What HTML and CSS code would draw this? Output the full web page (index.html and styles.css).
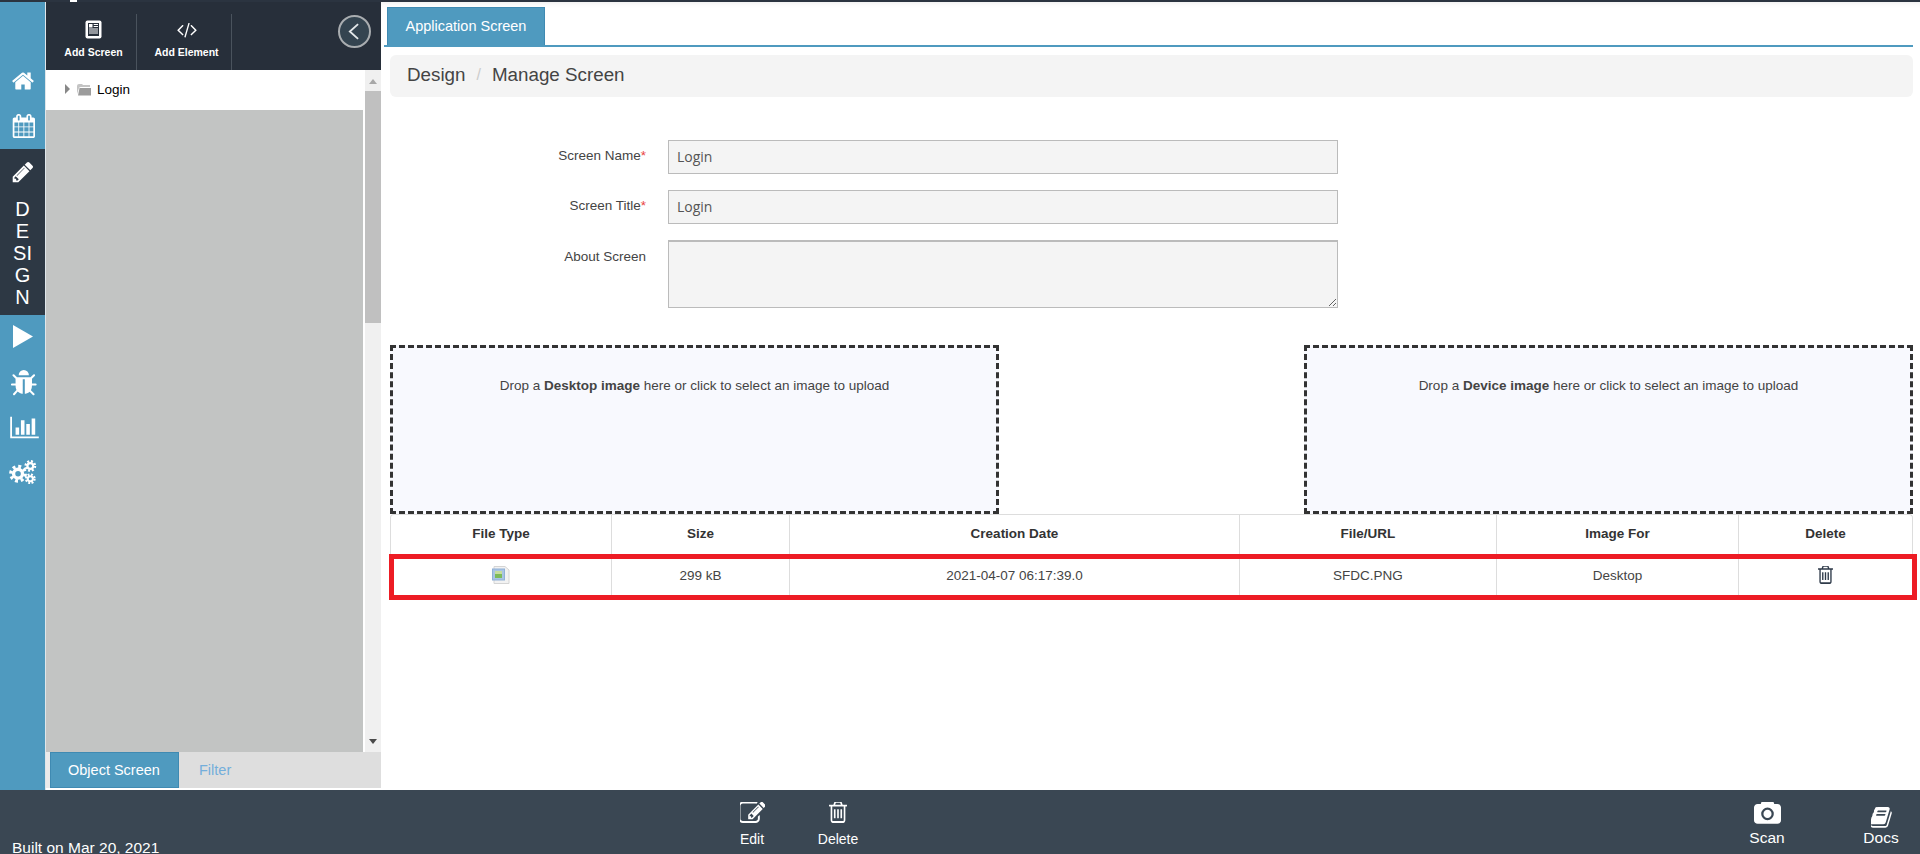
FILE: index.html
```html
<!DOCTYPE html>
<html lang="en">
<head>
    <meta charset="UTF-8">
    <title>Design - Manage Screen</title>
    <link rel="stylesheet" href="styles.css">
</head>
<body>
    <div class="top-strip"><span class="logo-tick"></span></div>
    <div class="app-row">
        <nav class="side-nav">
            <a class="nav-item nav-item-up"><svg class="nav-icon" viewBox="0 0 1792 1792"><path d="M1472 992v480q0 26-19 45t-45 19h-384v-384h-256v384h-384q-26 0-45-19t-19-45v-480q0-1 .5-3t.5-3l575-474 575 474q1 2 1 6zm223-69l-62 74q-8 9-21 11h-3q-13 0-21-7l-692-577-692 577q-12 8-24 7-13-2-21-11l-62-74q-8-10-7-23.5t11-21.5l719-599q32-26 76-26t76 26l244 204v-195q0-14 9-23t23-9h192q14 0 23 9t9 23v408l219 182q10 8 11 21.5t-7 23.5z"/></svg></a>
            <a class="nav-item nav-item-up"><svg class="nav-icon" viewBox="0 0 1664 1792"><path d="M192 1664h288v-288h-288v288zm352 0h320v-288h-320v288zm-352-352h288v-320h-288v320zm352 0h320v-320h-320v320zm-352-384h288v-288h-288v288zm736 736h320v-288h-320v288zm-384-736h320v-288h-320v288zm768 736h288v-288h-288v288zm-384-352h320v-320h-320v320zm-352-864v-288q0-13-9.5-22.5t-22.5-9.5h-64q-13 0-22.5 9.5t-9.5 22.5v288q0 13 9.5 22.5t22.5 9.5h64q13 0 22.5-9.5t9.5-22.5zm736 864h288v-320h-288v320zm-384-384h320v-288h-320v288zm384 0h288v-288h-288v288zm32-480v-288q0-13-9.5-22.5t-22.5-9.5h-64q-13 0-22.5 9.5t-9.5 22.5v288q0 13 9.5 22.5t22.5 9.5h64q13 0 22.5-9.5t9.5-22.5zm384-64v1280q0 52-38 90t-90 38h-1408q-52 0-90-38t-38-90v-1280q0-52 38-90t90-38h128v-96q0-66 47-113t113-47h64q66 0 113 47t47 113v96h384v-96q0-66 47-113t113-47h64q66 0 113 47t47 113v96h128q52 0 90 38t38 90z"/></svg></a>
            <div class="nav-active">
                <a class="nav-item"><svg class="nav-icon" viewBox="0 0 1792 1792"><path d="M491 1536l91-91-235-235-91 91v107h128v128h107zm523-928q0-22-22-22-10 0-17 7l-542 542q-7 7-7 17 0 22 22 22 10 0 17-7l542-542q7-7 7-17zm-54-192l416 416-832 832h-416v-416zm683 96q0 53-37 90l-166 166-416-416 166-165q36-38 90-38 53 0 91 38l235 234q37 39 37 91z"/></svg></a>
                <div class="nav-label">DESIGN</div>
            </div>
            <a class="nav-item nav-item-up"><svg class="nav-icon nav-icon-play" viewBox="0 0 21 24"><path d="M0 0 L21 12 L0 24 Z"/></svg></a>
            <a class="nav-item"><svg class="nav-icon nav-icon-bug" viewBox="100 100 1620 1600"><path d="M1696 960q0 26-19 45t-45 19h-224q0 171-67 290l208 209q19 19 19 45t-19 45q-18 19-45 19t-45-19l-198-197q-5 5-15 13t-42 28.5-65 36.5-82 29-97 13v-896h-128v896q-51 0-101.5-13.5t-87-33-66-39-43.5-32.5l-15-14-183 207q-20 21-48 21-24 0-43-16-19-18-20.5-44.5t15.5-46.5l202-227q-58-114-58-274h-224q-26 0-45-19t-19-45 19-45 45-19h224v-294l-173-173q-19-19-19-45t19-45 45-19 45 19l173 173h844l173-173q19-19 45-19t45 19 19 45-19 45l-173 173v294h224q26 0 45 19t19 45zm-480-576h-640q0-133 93.5-226.5t226.5-93.5 226.5 93.5 93.5 226.5z"/></svg></a>
            <a class="nav-item"><svg class="nav-icon nav-icon-chart" viewBox="0 0 2048 1792"><path d="M640 896v512h-256v-512h256zm384-512v1024h-256v-1024h256zm1024 1152v128h-2048v-1536h128v1408h1920zm-640-896v768h-256v-768h256zm384-384v1152h-256v-1152h256z"/></svg></a>
            <a class="nav-item nav-item-up"><svg class="nav-icon nav-icon-gears" viewBox="0 0 26 22">
                <circle class="gear-part" cx="9" cy="13" r="6.5" stroke-width="3" stroke-dasharray="2.6 2.5"/>
                <circle class="gear-part" cx="9" cy="13" r="4" stroke-width="3"/>
                <circle class="gear-part" cx="20" cy="6" r="4.2" stroke-width="2.2" stroke-dasharray="1.8 1.5"/>
                <circle class="gear-part" cx="20" cy="6" r="2.6" stroke-width="2"/>
                <circle class="gear-part" cx="20" cy="17.5" r="3.8" stroke-width="2" stroke-dasharray="1.7 1.3"/>
                <circle class="gear-part" cx="20" cy="17.5" r="2.3" stroke-width="1.8"/>
            </svg></a>
        </nav>

        <aside class="tree-panel">
            <div class="toolbar">
                <a class="tool-btn tool-screen">
                    <svg class="tool-icon" viewBox="0 0 18 19">
                        <rect x="0.5" y="0.5" width="16" height="18" rx="2" fill="#fff"/>
                        <rect x="3" y="3" width="11" height="13" fill="#272f3a"/>
                        <rect x="4" y="4" width="3.5" height="3.5" fill="#fff"/>
                        <path d="M8.7 4.5h4.3M8.7 6.5h4.3M4 9h9M4 11h9M4 13h9" stroke="#fff" fill="none"/>
                    </svg>
                    <span>Add Screen</span>
                </a>
                <a class="tool-btn tool-element">
                    <svg class="tool-icon tool-icon-code" viewBox="0 0 1920 1792"><path d="M617 1399l-50 50q-10 10-23 10t-23-10l-466-466q-10-10-10-23t10-23l466-466q10-10 23-10t23 10l50 50q10 10 10 23t-10 23l-393 393 393 393q10 10 10 23t-10 23zm591-1067l-373 1291q-4 13-15.5 19.5t-23.5 2.5l-62-17q-13-4-19.5-15.5t-2.5-24.5l373-1291q4-13 15.5-19.5t23.5-2.5l62 17q13 4 19.5 15.5t2.5 24.5zm657 651l-466 466q-10 10-23 10t-23-10l-50-50q-10-10-10-23t10-23l393-393-393-393q-10-10-10-23t10-23l50-50q10-10 23-10t23 10l466 466q10 10 10 23t-10 23z"/></svg>
                    <span>Add Element</span>
                </a>
                <a class="collapse-btn">
                    <svg viewBox="0 0 12 18" class="collapse-icon"><path d="M11 1 L2 9 L11 17" fill="none" stroke="#e4e8ea" stroke-width="2"/></svg>
                </a>
            </div>
            <div class="tree-body">
                <div class="tree-col">
                    <div class="tree-node">
                        <span class="tree-arrow"></span>
                        <svg class="tree-folder" viewBox="0 0 14 12"><path d="M0 2 Q0 0 2 0 H5 L6 1 H13 V3 H4 Q2.500 3 2 4 L0 10 Z" fill="#c4c4c4"/><path d="M1 11.500 L2.500 4 H14 V11.500 Z" fill="#9c9c9c"/></svg>
                        <span>Login</span>
                    </div>
                    <div class="tree-empty"></div>
                </div>
                <div class="scrollbar">
                    <span class="scroll-up"></span>
                    <span class="scroll-thumb"></span>
                    <span class="scroll-down"></span>
                </div>
            </div>
            <div class="panel-tabs">
                <a class="panel-tab panel-tab-on">Object Screen</a>
                <a class="panel-tab">Filter</a>
            </div>
        </aside>

        <main class="content">
            <div class="tab-line">
                <a class="app-tab">Application Screen</a>
            </div>
            <div class="breadcrumb">
                <span>Design</span>
                <span class="crumb-sep">/</span>
                <span>Manage Screen</span>
            </div>
            <form class="screen-form">
                <div class="form-row">
                    <label>Screen Name<em>*</em></label>
                    <input type="text" value="Login" readonly>
                </div>
                <div class="form-row">
                    <label>Screen Title<em>*</em></label>
                    <input type="text" value="Login" readonly>
                </div>
                <div class="form-row">
                    <label class="label-about">About Screen</label>
                    <textarea readonly></textarea>
                </div>
            </form>
            <div class="drop-row">
                <div class="drop-zone">Drop a <b>Desktop image</b> here or click to select an image to upload</div>
                <div class="drop-zone">Drop a <b>Device image</b> here or click to select an image to upload</div>
            </div>
            <div class="table-wrap">
                <table class="file-table">
                    <thead>
                        <tr>
                            <th>File Type</th>
                            <th>Size</th>
                            <th>Creation Date</th>
                            <th>File/URL</th>
                            <th>Image For</th>
                            <th>Delete</th>
                        </tr>
                    </thead>
                    <tbody>
                        <tr>
                            <td>
                                <svg class="file-icon" viewBox="0 0 18 18">
                                    <path d="M2 .5H13L17 4V17.500H2Z" fill="#f2f2f2" stroke="#d4d4d4"/>
                                    <rect x="0.500" y="3" width="12" height="11" fill="#a9c4e4" stroke="#8fb0d6"/>
                                    <rect x="3" y="5" width="7" height="7" fill="#7dbb5a"/>
                                    <rect x="3" y="5" width="7" height="3" fill="#c6dd9c"/>
                                </svg>
                            </td>
                            <td>299 kB</td>
                            <td>2021-04-07 06:17:39.0</td>
                            <td>SFDC.PNG</td>
                            <td>Desktop</td>
                            <td><svg class="trash-icon" viewBox="192 200 1408 1470" preserveAspectRatio="none"><path d="M704 736v576q0 14-9 23t-23 9h-64q-14 0-23-9t-9-23v-576q0-14 9-23t23-9h64q14 0 23 9t9 23zm256 0v576q0 14-9 23t-23 9h-64q-14 0-23-9t-9-23v-576q0-14 9-23t23-9h64q14 0 23 9t9 23zm256 0v576q0 14-9 23t-23 9h-64q-14 0-23-9t-9-23v-576q0-14 9-23t23-9h64q14 0 23 9t9 23zm128 724v-948h-896v948q0 22 7 40.500t14.500 27 10.500 8.500h832q3 0 10.500-8.500t14.500-27 7-40.500zm-672-1076h448l-48-117q-7-9-17-11h-317q-10 2-17 11zm928 32v64q0 14-9 23t-23 9h-96v948q0 83-47 143.500t-113 60.500h-832q-66 0-113-58.500t-47-141.500v-952h-96q-14 0-23-9t-9-23v-64q0-14 9-23t23-9h309l70-167q15-37 54-63t79-26h320q40 0 79 26t54 63l70 167h309q14 0 23 9t9 23z"/></svg></td>
                        </tr>
                    </tbody>
                </table>
                <div class="row-highlight"></div>
            </div>
        </main>
    </div>
    <footer class="action-bar">
        <div class="built-on">Built on Mar 20, 2021</div>
        <div class="actions-mid">
            <a class="action"><svg class="icon-edit" viewBox="100 150 1650 1450"><path d="M888 1184l116-116-152-152-116 116v56h96v96h56zm440-720q-16-16-33 1l-350 350q-17 17-1 33t33-1l350-350q17-17 1-33zm80 594v190q0 119-84.500 203.500t-203.500 84.500h-832q-119 0-203.500-84.500t-84.500-203.500v-832q0-119 84.500-203.500t203.500-84.500h832q63 0 117 25 15 7 18 23 3 17-9 29l-49 49q-14 14-32 8-23-6-45-6h-832q-66 0-113 47t-47 113v832q0 66 47 113t113 47h832q66 0 113-47t47-113v-126q0-13 9-22l64-64q15-15 35-7t20 29zm-96-738l288 288-672 672h-288v-288zm444 132l-92 92-288-288 92-92q28-28 68-28t68 28l152 152q28 28 28 68t-28 68z"/></svg><span>Edit</span></a>
            <a class="action"><svg class="icon-delete" viewBox="192 200 1408 1470" preserveAspectRatio="none"><path d="M704 736v576q0 14-9 23t-23 9h-64q-14 0-23-9t-9-23v-576q0-14 9-23t23-9h64q14 0 23 9t9 23zm256 0v576q0 14-9 23t-23 9h-64q-14 0-23-9t-9-23v-576q0-14 9-23t23-9h64q14 0 23 9t9 23zm256 0v576q0 14-9 23t-23 9h-64q-14 0-23-9t-9-23v-576q0-14 9-23t23-9h64q14 0 23 9t9 23zm128 724v-948h-896v948q0 22 7 40.500t14.500 27 10.500 8.500h832q3 0 10.500-8.500t14.500-27 7-40.500zm-672-1076h448l-48-117q-7-9-17-11h-317q-10 2-17 11zm928 32v64q0 14-9 23t-23 9h-96v948q0 83-47 143.500t-113 60.500h-832q-66 0-113-58.500t-47-141.500v-952h-96q-14 0-23-9t-9-23v-64q0-14 9-23t23-9h309l70-167q15-37 54-63t79-26h320q40 0 79 26t54 63l70 167h309q14 0 23 9t9 23z"/></svg><span>Delete</span></a>
        </div>
        <div class="actions-right">
            <a class="action action-lg"><svg class="icon-scan" viewBox="0 128 1920 1536"><path d="M960 672q119 0 203.500 84.500t84.500 203.500-84.500 203.500-203.500 84.500-203.500-84.500-84.500-203.500 84.500-203.500 203.500-84.500zm704-416q106 0 181 75t75 181v896q0 106-75 181t-181 75h-1408q-106 0-181-75t-75-181v-896q0-106 75-181t181-75h224l51-136q19-49 69.500-84.500t103.500-35.500h512q53 0 103.500 35.500t69.500 84.500l51 136h224zm-704 1152q185 0 316.500-131.500t131.500-316.500-131.500-316.500-316.500-131.500-316.500 131.500-131.500 316.500 131.500 316.500 316.500 131.500z"/></svg><span>Scan</span></a>
            <a class="action action-lg"><svg class="icon-docs" viewBox="110 120 1570 1570"><path d="M1639 478q40 57 18 129l-275 906q-19 64-76.500 107.500t-122.500 43.500h-923q-77 0-148.500-53.500t-99.500-131.500q-24-67-2-127 0-4 3-27t4-37q1-8-3-21.500t-3-19.500q2-11 8-21t16.500-23.500 16.500-23.500q23-38 45-91.500t30-91.500q3-10 .5-30t-.5-28q3-11 17-28t17-23q21-36 42-92t25-90q1-9-2.500-32t.5-28q4-13 22-30.500t22-22.500q19-26 42.500-84.500t27.500-96.500q1-8-3-25.500t-2-26.500q2-8 9-18t18-23 17-21q8-12 16.500-30.500t15-35 16-36 19.500-32 26.500-23.500 36-11.500 47.500 5.500l-1 3q38-9 51-9h761q74 0 114 56t18 130l-274 906q-36 119-71.500 153.500t-128.500 34.500h-869q-27 0-38 15-11 16-1 43 24 70 144 70h923q29 0 56-15.500t35-41.500l300-987q7-22 5-57 38 15 59 43zm-1064 2q-4 13 2 22.500t20 9.500h608q13 0 25.500-9.500t16.500-22.500l21-64q4-13-2-22.500t-20-9.500h-608q-13 0-25.500 9.500t-16.500 22.500zm-83 256q-4 13 2 22.500t20 9.500h608q13 0 25.500-9.500t16.500-22.500l21-64q4-13-2-22.500t-20-9.500h-608q-13 0-25.500 9.500t-16.500 22.500z"/></svg><span>Docs</span></a>
        </div>
    </footer>
</body>
</html>
```

FILE: styles.css
```css
* {
    box-sizing: border-box;
}
html, body {
    height: 100%;
}
body {
    margin: 0;
    font-family: "Liberation Sans", Arial, sans-serif;
    font-size: 14px;
    color: #333;
    background-color: #fff;
    display: flex;
    flex-direction: column;
    overflow: hidden;
}
.top-strip {
    height: 2px;
    flex: none;
    background-color: #2b3440;
    position: relative;
}
.logo-tick {
    position: absolute;
    left: 70px;
    top: 0;
    width: 7px;
    height: 5px;
    background-color: #fff;
}
.app-row {
    height: 788px;
    flex: none;
    display: flex;
}

/* left icon rail */
.side-nav {
    width: 46px;
    flex: none;
    padding-top: 57px;
    background-color: #4f9abf;
    border-right: 1px solid #dfe6ea;
}
.nav-item {
    height: 45px;
    display: flex;
    align-items: center;
    justify-content: center;
}
.nav-item-up {
    padding-bottom: 2px;
}
.nav-icon {
    width: 24px;
    height: 24px;
    fill: #fff;
}
.nav-icon-play {
    width: 20px;
    height: 23px;
}
.nav-icon-bug {
    width: 26px;
    height: 27px;
    margin: 2px 0 0 3px;
}
.nav-icon-chart {
    width: 29px;
    height: 25px;
    margin-left: 3px;
}
.nav-icon-gears {
    width: 29px;
    height: 25px;
}
.gear-part {
    fill: none;
    stroke: #fff;
}
.nav-active {
    height: 166px;
    background-color: #2d3844;
}
.nav-label {
    width: 24px;
    margin: 4px auto 0;
    color: #fff;
    font-size: 20px;
    line-height: 22px;
    text-align: center;
    word-break: break-all;
}

/* tree panel */
.tree-panel {
    width: 335px;
    flex: none;
    display: flex;
    flex-direction: column;
    background-color: #fff;
}
.toolbar {
    height: 68px;
    flex: none;
    display: flex;
    background-color: #272f3a;
    padding-top: 12px;
    position: relative;
}
.tool-btn {
    height: 56px;
    border-right: 1px solid #4a535d;
    padding-left: 5px;
    display: flex;
    flex-direction: column;
    align-items: center;
    color: #fff;
    font-size: 10.5px;
    font-weight: bold;
}
.tool-btn span {
    margin-top: 7px;
}
.tool-screen {
    width: 91px;
}
.tool-element {
    width: 95px;
}
.tool-icon {
    width: 18px;
    height: 19px;
    margin-top: 6px;
}
.tool-icon-code {
    width: 22px;
    fill: #fff;
}
.collapse-btn {
    position: absolute;
    left: 292px;
    top: 13px;
    width: 33px;
    height: 33px;
    border-radius: 50%;
    border: 2px solid #a9adb0;
    background-color: #344450;
    display: flex;
    align-items: center;
    justify-content: center;
}
.collapse-icon {
    width: 11px;
    height: 17px;
    margin-right: 2px;
}
.tree-body {
    flex: 1;
    display: flex;
    min-height: 0;
}
.tree-col {
    width: 317px;
    display: flex;
    flex-direction: column;
}
.tree-node {
    height: 40px;
    flex: none;
    display: flex;
    align-items: center;
    padding: 0 0 2px 19px;
    color: #000;
    font-size: 13.5px;
}
.tree-arrow {
    width: 0;
    height: 0;
    border-left: 5px solid #888;
    border-top: 5px solid transparent;
    border-bottom: 5px solid transparent;
    margin-right: 7px;
}
.tree-folder {
    width: 14px;
    height: 12px;
    margin-right: 6px;
    margin-top: 1px;
}
.tree-empty {
    flex: 1;
    background-color: #c2c4c3;
}
.scrollbar {
    width: 16px;
    margin-left: 2px;
    background-color: #f0f0f0;
    display: flex;
    flex-direction: column;
    align-items: center;
}
.scroll-up {
    height: 21px;
    width: 16px;
    flex: none;
    position: relative;
}
.scroll-up::after {
    content: "";
    position: absolute;
    left: 4px;
    top: 9px;
    border-left: 4px solid transparent;
    border-right: 4px solid transparent;
    border-bottom: 5px solid #a8a8a8;
}
.scroll-thumb {
    height: 232px;
    width: 16px;
    flex: none;
    background-color: #c0c0c0;
}
.scroll-down {
    margin-top: auto;
    margin-bottom: 8px;
    border-left: 4px solid transparent;
    border-right: 4px solid transparent;
    border-top: 5px solid #4a4a4a;
}
.panel-tabs {
    height: 36px;
    flex: none;
    display: flex;
    margin-bottom: 2px;
    padding-left: 4px;
    font-size: 14.5px;
    background: linear-gradient(to right, #eaeaea 4px, #dedede 4px);
}
.panel-tab {
    padding: 0 20px;
    line-height: 36px;
    color: #74aedb;
}
.panel-tab-on {
    width: 129px;
    padding: 0 17px;
    color: #fff;
    background-color: #4f9abf;
    border: 1px solid #3f8ab2;
    line-height: 34px;
    white-space: nowrap;
}

/* main content */
.content {
    flex: 1;
    min-width: 0;
    padding: 5px 7px 0 9px;
    box-shadow: inset 0 6px 6px -6px #e6e6e6;
}
.tab-line {
    height: 40px;
    margin: 0 0 0 -6px;
    padding-left: 3px;
    border-bottom: 2px solid #4f9abf;
    display: flex;
    align-items: flex-end;
}
.app-tab {
    width: 158px;
    height: 38px;
    line-height: 37px;
    text-align: center;
    font-size: 14.5px;
    color: #fff;
    background-color: #4f9abf;
    border: 1px solid #3f8ab2;
    border-bottom: none;
}
.breadcrumb {
    height: 42px;
    margin-top: 8px;
    padding: 0 0 2px 17px;
    border-radius: 6px;
    background-color: #f4f4f4;
    color: #444;
    font-size: 18.8px;
    display: flex;
    align-items: center;
    gap: 11px;
}
.crumb-sep {
    color: #ccc;
    font-size: 16px;
}
.screen-form {
    margin-top: 43px;
    height: 205px;
}
.form-row {
    display: flex;
    margin-bottom: 16px;
}
.form-row label {
    width: 256px;
    margin-right: 22px;
    padding-top: 8px;
    text-align: right;
    color: #444;
    font-size: 13.5px;
}
.form-row .label-about {
    padding-top: 9px;
}
.form-row em {
    color: #e8433f;
    font-style: normal;
}
.form-row input,
.form-row textarea {
    width: 670px;
    height: 34px;
    padding: 0 8px 2px;
    border: 1px solid #bbb;
    background-color: #f4f4f4;
    color: #555;
    font-family: "Open Sans", sans-serif;
    font-size: 14px;
    outline: none;
    display: block;
}
.form-row textarea {
    height: 68px;
    border-width: 2px 1px 1px;
    border-color: #bbb;
}
.drop-row {
    display: flex;
    justify-content: space-between;
}
.drop-zone {
    width: 609px;
    height: 169px;
    padding-top: 30px;
    border: 3px dashed #333;
    background-color: #f8f9fe;
    text-align: center;
    font-size: 13.5px;
    color: #444;
}
.table-wrap {
    position: relative;
}
.file-table {
    width: 100%;
    table-layout: fixed;
    border-collapse: separate;
    border-spacing: 0;
    border: 1px solid #ddd;
    border-bottom: none;
    border-radius: 4px 4px 0 0;
    font-size: 13.5px;
    color: #444;
}
.file-table th,
.file-table td {
    text-align: center;
    border-right: 1px solid #ddd;
    padding: 0 0 2px;
    vertical-align: middle;
}
.file-table th:last-child,
.file-table td:last-child {
    border-right: none;
}
.file-table th {
    height: 39px;
    font-size: 13.5px;
    color: #333;
}
.file-table td {
    height: 44px;
}
.file-table th:nth-child(1) { width: 221px; }
.file-table th:nth-child(2) { width: 178px; }
.file-table th:nth-child(3) { width: 450px; }
.file-table th:nth-child(4) { width: 257px; }
.file-table th:nth-child(5) { width: 242px; }
.file-icon {
    width: 18px;
    height: 18px;
    display: block;
    margin: 0 auto;
}
.trash-icon {
    width: 15px;
    height: 18px;
    fill: #2f3b4a;
    display: block;
    margin: 0 auto;
}
.row-highlight {
    position: absolute;
    left: -1px;
    right: -4px;
    top: 40px;
    height: 46px;
    border: 5px solid #ed1c24;
}

/* bottom bar */
.action-bar {
    height: 64px;
    flex: none;
    display: flex;
    color: #fff;
    background-color: #3a4753;
    overflow: hidden;
}
.built-on {
    width: 709px;
    padding: 49px 0 0 12px;
    font-size: 15.5px;
    line-height: 18px;
}
.actions-mid {
    display: flex;
}
.actions-right {
    display: flex;
    gap: 44px;
    margin-left: auto;
    padding-right: 4px;
}
.action {
    display: grid;
    grid-template-rows: 25px auto;
    row-gap: 4px;
    justify-items: center;
    width: 86px;
    padding-top: 12px;
    font-size: 14px;
    fill: #fff;
}
.action-lg {
    width: 70px;
    row-gap: 2px;
    font-size: 15.5px;
}
.icon-edit {
    width: 25px;
    height: 22px;
}
.icon-delete {
    width: 18px;
    height: 21px;
}
.icon-scan {
    width: 27px;
    height: 22px;
}
.icon-docs {
    width: 21px;
    height: 21px;
    margin-top: 5px;
}
```
